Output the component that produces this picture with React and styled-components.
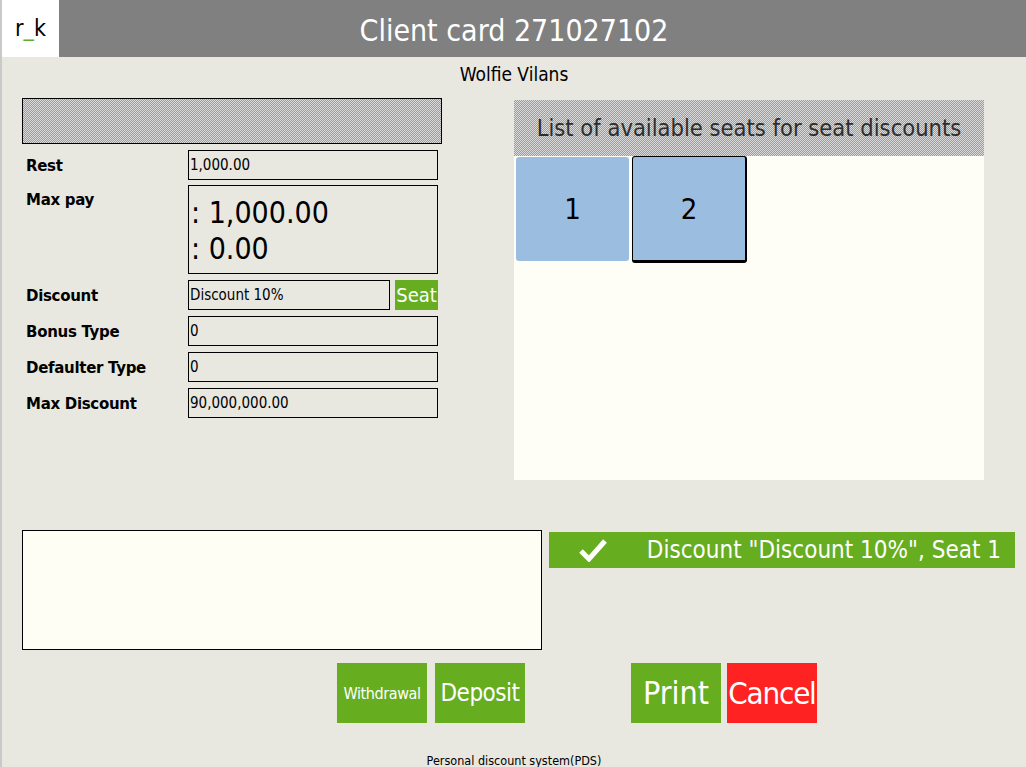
import React from "react";
import styled, { createGlobalStyle } from "styled-components";

const Global = createGlobalStyle`
  html, body {
    margin: 0;
    padding: 0;
    background: #e8e7e0;
  }
  body {
    font-family: "DejaVu Sans Condensed", "DejaVu Sans", sans-serif;
  }
`

const hatch = `repeating-conic-gradient(#9a9a9a 0 25%, #dcdcdc 0 50%) 0 0 / 2px 2px`

const Page = styled.div`
  width: 1026px;
  height: 767px;
  display: flex;
  flex-direction: column;
  border-left: 2px solid #c9c9c9;
  box-sizing: border-box;
  overflow: hidden;
`

const Header = styled.header`
  height: 57px;
  background: #808080;
  position: relative;
  display: flex;
  align-items: center;
  justify-content: center;
  color: #ffffff;
  font-size: 30px;
  padding-top: 4px;
  box-sizing: border-box;
`

const Logo = styled.div`
  position: absolute;
  left: 0;
  top: 0;
  width: 57px;
  height: 57px;
  background: #ffffff;
  color: #000;
  font-size: 23px;
  display: flex;
  align-items: center;
  justify-content: center;
  padding-bottom: 1px;
  box-sizing: border-box;

  span {
    color: #5fae2a;
  }
`

const ClientName = styled.div`
  text-align: center;
  font-size: 19px;
  margin-top: 6px;
  height: 24px;
`

const Main = styled.div`
  display: flex;
  padding: 0 0 0 20px;
  height: 382px;
  margin-top: 11px;
`

const LeftCol = styled.div`
  width: 420px;
  display: flex;
  flex-direction: column;
`

const HatchBox = styled.div`
  height: 46px;
  border: 1px solid #000;
  box-sizing: border-box;
  background: ${hatch};
  margin-bottom: 6px;
`

const Row = styled.div`
  display: flex;
  align-items: ${p => (p.$top ? "flex-start" : "center")};
  margin-bottom: ${p => p.$mb ?? 6}px;
`

const Label = styled.div`
  width: 162px;
  padding-left: 4px;
  font-size: 15px;
  font-weight: bold;
  font-family: "DejaVu Sans", sans-serif;
  letter-spacing: -0.3px;
  padding-top: ${p => (p.$top ? "6px" : "2px")};
`

const Field = styled.div`
  width: ${p => p.$w || 250}px;
  height: ${p => p.$h || 30}px;
  border: 1px solid #000;
  box-sizing: border-box;
  display: flex;
  align-items: center;
  font-size: 15px;
  padding-left: 1px;
`

const BigField = styled(Field)`
  flex-direction: column;
  align-items: flex-start;
  justify-content: center;
  font-size: 30px;
  line-height: 36px;
  padding-left: 2px;
  padding-top: 2px;
`

const SeatBtn = styled.div`
  width: 43px;
  height: 30px;
  margin-left: 5px;
  background: #66ad1f;
  color: #ffffff;
  font-size: 20px;
  display: flex;
  align-items: center;
  justify-content: center;
`

const RightCol = styled.div`
  margin-left: 72px;
  width: 470px;
  margin-top: 2px;
  height: 380px;
  background: #fefef6;
  display: flex;
  flex-direction: column;
`

const SeatsTitle = styled.div`
  height: 56px;
  background: ${hatch};
  color: #2e2e2e;
  font-size: 23.5px;
  display: flex;
  align-items: center;
  justify-content: center;
`

const SeatGrid = styled.div`
  display: flex;
  gap: 3px;
  padding: 1px 2px;
`

const Seat = styled.div`
  width: 113px;
  height: 104px;
  background: #9bbde0;
  border-radius: 3px;
  box-sizing: border-box;
  display: flex;
  align-items: center;
  justify-content: center;
  font-size: 29px;
  color: #000;
  ${p => p.$selected && `
    width: 115px;
    border: 1px solid #000;
    border-right-width: 2px;
    border-bottom-width: 3px;
    height: 107px;
    margin-top: -1px;
  `}
`

const Bottom = styled.div`
  display: flex;
  padding-left: 20px;
  margin-top: 50px;
`

const Notes = styled.div`
  width: 520px;
  height: 120px;
  border: 1px solid #000;
  box-sizing: border-box;
  background: #fefef5;
`

const Message = styled.div`
  margin-left: 7px;
  margin-top: 2px;
  width: 466px;
  height: 36px;
  background: #66ad1f;
  color: #ffffff;
  font-size: 24px;
  display: flex;
  align-items: center;
  justify-content: space-between;
  padding: 0 14px 0 30px;
  box-sizing: border-box;
`

const Actions = styled.div`
  display: flex;
  margin-top: 13px;
  padding-left: 335px;
`

const Group = styled.div`
  display: flex;
  gap: ${p => p.$gap}px;
  margin-right: ${p => p.$mr || 0}px;
`

const Action = styled.div`
  width: 90px;
  height: 60px;
  background: ${p => p.$bg || "#66ad1f"};
  color: #ffffff;
  font-size: ${p => p.$size || 32}px;
  display: flex;
  align-items: center;
  justify-content: center;
  letter-spacing: ${p => p.$ls || 0}px;
  white-space: nowrap;
  overflow: hidden;
`

const Footer = styled.div`
  margin-top: auto;
  text-align: center;
  font-size: 12.5px;
  height: 16px;
  line-height: 16px;
  margin-bottom: -2px;
`

const Check = () => (
  <svg width="28" height="24" viewBox="0 0 28 24">
    <path d="M2 13 L10 21 L26 3" fill="none" stroke="#fff" strokeWidth="5" strokeLinejoin="miter" />
  </svg>
)

export default function App() {
  return (
    <>
      <Global />
      <Page>
        <Header>
          <Logo>r<span>_</span>k</Logo>
          Client card 271027102
        </Header>
        <ClientName>Wolfie Vilans</ClientName>
        <Main>
          <LeftCol>
            <HatchBox />
            <Row $mb={5}>
              <Label>Rest</Label>
              <Field>1,000.00</Field>
            </Row>
            <Row $top>
              <Label $top>Max pay</Label>
              <BigField $h={89}>
                <div>: 1,000.00</div>
                <div>: 0.00</div>
              </BigField>
            </Row>
            <Row>
              <Label>Discount</Label>
              <Field $w={202}>Discount 10%</Field>
              <SeatBtn>Seat</SeatBtn>
            </Row>
            <Row>
              <Label>Bonus Type</Label>
              <Field>0</Field>
            </Row>
            <Row>
              <Label>Defaulter Type</Label>
              <Field>0</Field>
            </Row>
            <Row>
              <Label>Max Discount</Label>
              <Field>90,000,000.00</Field>
            </Row>
          </LeftCol>
          <RightCol>
            <SeatsTitle>List of available seats for seat discounts</SeatsTitle>
            <SeatGrid>
              <Seat>1</Seat>
              <Seat $selected>2</Seat>
            </SeatGrid>
          </RightCol>
        </Main>
        <Bottom>
          <Notes />
          <Message>
            <Check />
            <span>Discount "Discount 10%", Seat 1</span>
          </Message>
        </Bottom>
        <Actions>
          <Group $gap={8} $mr={106}>
            <Action $size={16} $ls={-0.4}>Withdrawal</Action>
            <Action $size={24} $ls={-0.5}>Deposit</Action>
          </Group>
          <Group $gap={6}>
            <Action>Print</Action>
            <Action $bg="#ff2222" $size={31} $ls={-1.2}>Cancel</Action>
          </Group>
        </Actions>
        <Footer>Personal discount system(PDS)</Footer>
      </Page>
    </>
  )
}
